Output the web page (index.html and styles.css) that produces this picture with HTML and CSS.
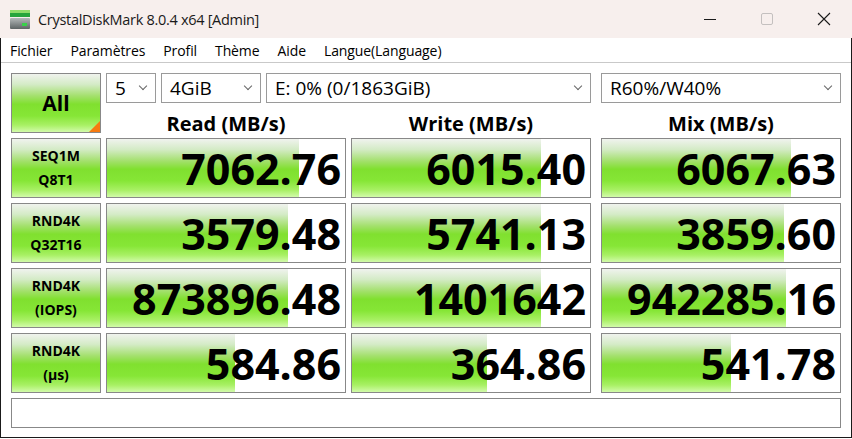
FILE: index.html
```html
<!DOCTYPE html>
<html lang="fr">
<head>
    <meta charset="UTF-8">
    <title>CrystalDiskMark 8.0.4 x64 [Admin]</title>
    <link rel="stylesheet" href="styles.css">
</head>
<body>
    <div class="titlebar">
        <svg class="app-icon" width="20" height="19" viewBox="0 0 20 19">
            <defs>
                <linearGradient id="drive" x1="0" y1="0" x2="0" y2="1">
                    <stop offset="0" stop-color="#b4b9b9"/>
                    <stop offset="1" stop-color="#5d6464"/>
                </linearGradient>
            </defs>
            <rect x="0" y="0" width="20" height="3" fill="#8fdc6a"/>
            <rect x="0" y="3" width="20" height="4" fill="#27a53c"/>
            <rect x="0" y="8" width="20" height="11" rx="1" fill="url(#drive)"/>
            <rect x="12" y="13" width="5" height="3" fill="#39d14a"/>
        </svg>
        <span class="title">CrystalDiskMark 8.0.4 x64 [Admin]</span>
        <div class="caption-buttons">
            <span class="caption-btn">
                <svg width="14" height="14" viewBox="0 0 14 14"><line x1="1" y1="7.5" x2="13" y2="7.5" stroke="#1a1a1a" stroke-width="1"/></svg>
            </span>
            <span class="caption-btn">
                <svg width="14" height="14" viewBox="0 0 14 14"><rect x="1.5" y="1.5" width="11" height="11" rx="1.5" fill="none" stroke="#c4c0bf" stroke-width="1"/></svg>
            </span>
            <span class="caption-btn">
                <svg width="14" height="14" viewBox="0 0 14 14"><path d="M1 1 L13 13 M13 1 L1 13" stroke="#1a1a1a" stroke-width="1.1"/></svg>
            </span>
        </div>
    </div>

    <div class="frame">
        <div class="menubar">
            <span class="menu-item">Fichier</span>
            <span class="menu-item">Paramètres</span>
            <span class="menu-item">Profil</span>
            <span class="menu-item">Thème</span>
            <span class="menu-item">Aide</span>
            <span class="menu-item">Langue(Language)</span>
        </div>

        <div class="main">
            <div class="all-btn">All</div>

            <div class="top-area">
                <div class="selects">
                    <div class="select sel-count"><span>5</span><i class="chev"></i></div>
                    <div class="select sel-size"><span>4GiB</span><i class="chev"></i></div>
                    <div class="select sel-drive"><span>E: 0% (0/1863GiB)</span><i class="chev"></i></div>
                    <div class="select sel-mix"><span>R60%/W40%</span><i class="chev"></i></div>
                </div>
                <div class="headers">
                    <div class="col-head">Read (MB/s)</div>
                    <div class="col-head">Write (MB/s)</div>
                    <div class="col-head mix">Mix (MB/s)</div>
                </div>
            </div>

            <!-- SEQ1M Q8T1 -->
            <div class="test-btn">SEQ1M<br>Q8T1</div>
            <div class="meter"><div class="bar" style="width: 192px"></div><span class="value">7062.76</span></div>
            <div class="meter"><div class="bar" style="width: 189px"></div><span class="value">6015.40</span></div>
            <div class="meter mix"><div class="bar" style="width: 189px"></div><span class="value">6067.63</span></div>

            <!-- RND4K Q32T16 -->
            <div class="test-btn">RND4K<br>Q32T16</div>
            <div class="meter"><div class="bar" style="width: 181px"></div><span class="value">3579.48</span></div>
            <div class="meter"><div class="bar" style="width: 189px"></div><span class="value">5741.13</span></div>
            <div class="meter mix"><div class="bar" style="width: 182px"></div><span class="value">3859.60</span></div>

            <!-- RND4K IOPS -->
            <div class="test-btn">RND4K<br>(IOPS)</div>
            <div class="meter"><div class="bar" style="width: 181px"></div><span class="value">873896.48</span></div>
            <div class="meter"><div class="bar" style="width: 189px"></div><span class="value">1401642</span></div>
            <div class="meter mix"><div class="bar" style="width: 184px"></div><span class="value">942285.16</span></div>

            <!-- RND4K latence -->
            <div class="test-btn">RND4K<br>(μs)</div>
            <div class="meter"><div class="bar" style="width: 128px"></div><span class="value">584.86</span></div>
            <div class="meter"><div class="bar" style="width: 135px"></div><span class="value">364.86</span></div>
            <div class="meter mix"><div class="bar" style="width: 129px"></div><span class="value">541.78</span></div>

            <div class="status"></div>
        </div>
    </div>
</body>
</html>
```

FILE: styles.css
```css
* {
    margin: 0;
    padding: 0;
    box-sizing: border-box;
}

body {
    font-family: "Open Sans", "Noto Sans", sans-serif;
    background: #ffffff;
    color: #000;
    width: 852px;
    height: 439px;
    overflow: hidden;
}

/* barre de titre */
.titlebar {
    height: 38px;
    background: #f7efed;
    display: flex;
    align-items: center;
    padding-left: 10px;
}

.app-icon {
    margin-top: 1px;
}

.title {
    margin-left: 8px;
    font-size: 14.5px;
    color: #1a1a1a;
    letter-spacing: -0.3px;
}

.caption-buttons {
    margin-left: auto;
    display: flex;
    height: 100%;
}

.caption-btn {
    width: 57px;
    display: flex;
    align-items: center;
    justify-content: center;
}

/* cadre de la fenetre */
.frame {
    height: 400px;
    border-left: 1px solid #1a1a1a;
    border-right: 1px solid #1a1a1a;
    border-bottom: 1px solid #1a1a1a;
}

.menubar {
    height: 25px;
    display: flex;
    align-items: center;
    padding-left: 9px;
    gap: 18px;
    border-bottom: 1px solid #c9c9c9;
    font-size: 14px;
    letter-spacing: -0.1px;
}

.main {
    display: grid;
    grid-template-columns: 90px 240px 240px 245px;
    grid-template-rows: repeat(5, 60px) 30px;
    column-gap: 5px;
    row-gap: 5px;
    padding: 10px 10px 0 10px;
}

/* degrade vert commun */
.all-btn,
.test-btn,
.bar {
    background: linear-gradient(to bottom,
        #f0f3ee 0%,
        #d4ebc6 18%,
        #a3e06c 38%,
        #80e02f 52%,
        #86e636 72%,
        #a8f064 88%,
        #d2fbaa 100%);
}

.all-btn {
    position: relative;
    border: 1px solid #888;
    display: flex;
    align-items: center;
    justify-content: center;
    font-size: 21px;
    font-weight: 700;
}

.all-btn::after {
    content: '';
    position: absolute;
    right: 0;
    bottom: 0;
    border-left: 11px solid transparent;
    border-bottom: 11px solid #f77a10;
}

.top-area {
    grid-column: 2 / 5;
    display: flex;
    flex-direction: column;
}

.selects {
    height: 30px;
    display: flex;
    gap: 5px;
}

.select {
    height: 30px;
    border: 1px solid #9a9a9a;
    display: flex;
    align-items: center;
    padding-left: 8px;
    padding-right: 9px;
    font-size: 19px;
}

.select span {
    flex: 1;
}

.sel-count { width: 50px; }
.sel-size { width: 100px; }
.sel-drive { width: 325px; }
.sel-mix { width: 240px; margin-left: 5px; }

.chev {
    width: 6px;
    height: 6px;
    border-right: 1px solid #666;
    border-bottom: 1px solid #666;
    transform: rotate(45deg);
    margin-top: -4px;
}

.headers {
    height: 30px;
    display: grid;
    grid-template-columns: 240px 240px 245px;
    column-gap: 5px;
}

.col-head {
    text-align: center;
    font-size: 20px;
    font-weight: 700;
    line-height: 30px;
    padding-top: 6px;
}

.col-head.mix {
    width: 240px;
    justify-self: end;
}

.test-btn {
    border: 1px solid #888;
    display: flex;
    align-items: center;
    justify-content: center;
    text-align: center;
    font-size: 14px;
    font-weight: 700;
    line-height: 24px;
}

.meter {
    position: relative;
    border: 1px solid #888;
    background: #fff;
    display: flex;
    align-items: center;
    justify-content: flex-end;
    padding-right: 4px;
}

.meter.mix {
    width: 240px;
    justify-self: end;
}

.bar {
    position: absolute;
    left: 0;
    top: 0;
    bottom: 0;
}

.value {
    position: relative;
    font-size: 43px;
    font-weight: 700;
    line-height: 1;
}

.status {
    grid-column: 1 / 5;
    border: 1px solid #888;
}
```
